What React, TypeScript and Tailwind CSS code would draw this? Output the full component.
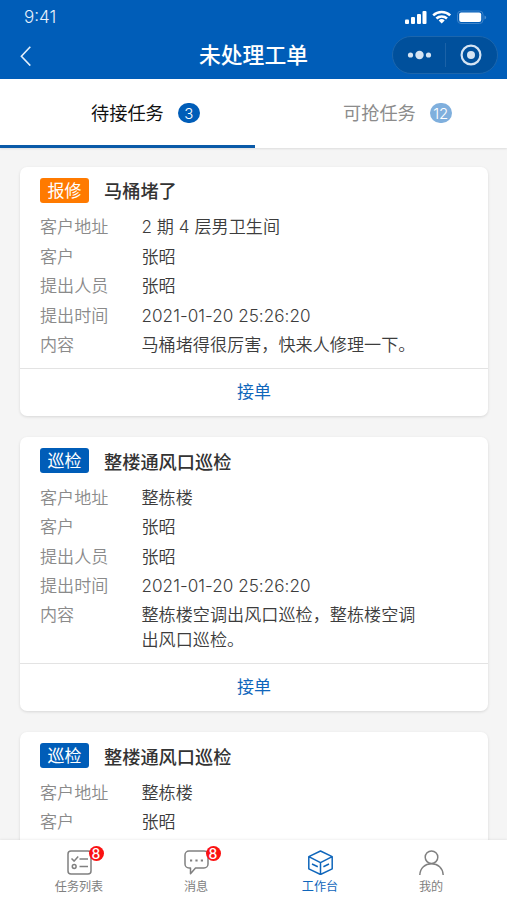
import type { ReactNode } from 'react';

interface Order {
  tag: string;
  tagClass: string;
  title: string;
  rows: { label: string; value: string }[];
  // the last card runs on under the tab bar, only its head is shown
  partial?: boolean;
}

const inspection: Order = {
  tag: '巡检',
  tagClass: 'bg-[#005db8]',
  title: '整楼通风口巡检',
  rows: [
    { label: '客户地址', value: '整栋楼' },
    { label: '客户', value: '张昭' },
    { label: '提出人员', value: '张昭' },
    { label: '提出时间', value: '2021-01-20 25:26:20' },
    { label: '内容', value: '整栋楼空调出风口巡检，整栋楼空调出风口巡检。' },
  ],
};

const orders: Order[] = [
  {
    tag: '报修',
    tagClass: 'bg-[#ff7a00]',
    title: '马桶堵了',
    rows: [
      { label: '客户地址', value: '2 期 4 层男卫生间' },
      { label: '客户', value: '张昭' },
      { label: '提出人员', value: '张昭' },
      { label: '提出时间', value: '2021-01-20 25:26:20' },
      { label: '内容', value: '马桶堵得很厉害，快来人修理一下。' },
    ],
  },
  inspection,
  { ...inspection, rows: inspection.rows.slice(0, 2), partial: true },
];

export default function App() {
  return (
    <div className="flex h-[900px] w-[507px] flex-col overflow-hidden bg-[#f5f5f5] font-['Inter','Noto_Sans_CJK_SC',sans-serif]">
      <Header />
      <div className="z-10 flex h-[69px] shrink-0 bg-white shadow-[0_1px_2px_rgba(0,0,0,0.1)]">
        <Tab label="待接任务" count={3} active />
        <Tab label="可抢任务" count={12} />
      </div>
      <main className="flex min-h-0 flex-1 flex-col gap-[21px] pt-[19px] pr-[19px] pl-5">
        {orders.map((order, i) => (
          <OrderCard key={i} order={order} />
        ))}
      </main>
      <TabBar />
    </div>
  );
}

function Header() {
  return (
    <header className="flex h-[79px] shrink-0 flex-col bg-[#005db8] text-white">
      <div className="flex h-[35px] items-center justify-between pr-[20px] pl-[24px]">
        <span className="pt-px text-[17px] font-light text-[#e6f1fc]">9:41</span>
        <StatusIcons />
      </div>
      <div className="grid h-[40px] grid-cols-[1fr_auto_1fr] items-center pr-[9px] pl-[20px]">
        <svg className="mt-[2px]" width="12" height="20" viewBox="0 0 12 20" fill="none" stroke="#e3effb" strokeWidth="1.6">
          <path d="M10.3 0.8 L1.4 10.3 L10.3 19.6" />
        </svg>
        <h1 className="-ml-[11px] pt-[2px] text-[21.8px] leading-none font-medium">未处理工单</h1>
        <div className="flex h-[38px] w-[106px] items-center justify-self-end rounded-full border border-[#1c66ad] bg-[#00509c]">
          <svg width="104" height="36" viewBox="0 0 104 36" fill="none">
            <circle cx="17.5" cy="18" r="2.6" fill="#d5e4f3" />
            <circle cx="26.5" cy="18" r="4.2" fill="#d5e4f3" />
            <circle cx="35.5" cy="18" r="2.6" fill="#d5e4f3" />
            <path d="M52.5 6v24" stroke="#1b62a7" />
            <circle cx="78" cy="18" r="9.4" stroke="#d5e4f3" strokeWidth="2.2" />
            <circle cx="78" cy="18" r="4" fill="#d5e4f3" />
          </svg>
        </div>
      </div>
    </header>
  );
}

function StatusIcons() {
  return (
    <svg className="-mt-[2px]" width="82" height="16" viewBox="0 0 82 16" fill="none">
      <g fill="#fff">
        <rect x="0" y="10.5" width="4" height="4.5" rx="1" />
        <rect x="6" y="8" width="4" height="7" rx="1" />
        <rect x="12" y="5" width="4" height="10" rx="1" />
        <rect x="17.5" y="2" width="4" height="13" rx="1" />
      </g>
      <g stroke="#fff" strokeWidth="2.5">
        <path d="M28.2 6.3a12.3 12.3 0 0 1 17 0" />
        <path d="M31.4 9.5a7.7 7.7 0 0 1 10.6 0" />
      </g>
      <path d="M33.7 11.5a4.4 4.4 0 0 1 6 0l-3 3z" fill="#fff" />
      <rect x="52.5" y="2" width="25.5" height="12.5" rx="3.5" stroke="#3f84c9" />
      <rect x="54.2" y="3.6" width="22" height="9.3" rx="2" fill="#fff" />
      <path d="M79.5 6.5v4q1.6-.6 1.6-2t-1.6-2z" fill="#4f8fcf" />
    </svg>
  );
}

function Tab({ label, count, active }: { label: string; count: number; active?: boolean }) {
  return (
    <div
      className={`flex items-center border-b-[3px] pt-[2px] ${
        active ? 'w-[255px] border-[#0a5aa8] pl-[91px] text-[#111]' : 'w-[252px] border-transparent pl-[88px] text-[#8c8c8c]'
      }`}
    >
      <span className="text-[18.2px] leading-none">{label}</span>
      <span
        className={`ml-[14px] flex h-5 w-[22px] items-center justify-center rounded-full text-[15px] leading-none font-[350] text-white ${
          active ? 'bg-[#005db8]' : 'bg-[#7fafdd]'
        }`}
      >
        {count}
      </span>
    </div>
  );
}

function OrderCard({ order }: { order: Order }) {
  return (
    <section
      className={`bg-white shadow-[0_1px_3px_rgba(0,0,0,0.12)] ${
        order.partial ? 'min-h-0 flex-1 rounded-t-[7px]' : 'shrink-0 rounded-[7px]'
      }`}
    >
      <div className={`px-5 pt-[11px] ${order.partial ? '' : 'pb-[10.5px]'}`}>
        <div className="flex h-[25px] items-center">
          <span className={`flex h-[25px] w-[49px] items-center justify-center rounded-[3px] pt-px text-[17px] leading-none text-white ${order.tagClass}`}>
            {order.tag}
          </span>
          <h2 className="ml-[15px] pt-[2px] text-[18.2px] leading-none font-medium text-[#333]">{order.title}</h2>
        </div>
        <dl className="mt-[12.4px] flex flex-col gap-[5px] text-[17.1px] leading-[24.4px]">
          {order.rows.map(row => (
            <div key={row.label} className="flex">
              <dt className="w-[101.5px] shrink-0 font-[350] text-[#8a8a8a]">{row.label}</dt>
              <dd className="w-[280px] font-[350] tracking-[0.03px] text-[#3c3c3c]">{row.value}</dd>
            </div>
          ))}
        </dl>
      </div>
      {!order.partial && (
        <button className="block h-[48.5px] w-full border-t border-[#e3e3e3] text-[17px] leading-[45px] text-[#0f66bb]">
          接单
        </button>
      )}
    </section>
  );
}

function TabBar() {
  return (
    <nav className="z-10 flex h-[60px] shrink-0 bg-white shadow-[0_-1px_2px_rgba(0,0,0,0.06)]">
      <NavItem className="w-[158px] text-[#808080]" label="任务列表" badge={8}>
        <rect x="1" y="1" width="23" height="23" rx="3" />
        <path d="M4.5 8.5l2.7 2.6 4-4.6M12.5 9H21M12.5 16.5H21" />
        <circle cx="7.2" cy="16.5" r="1.9" />
      </NavItem>
      <NavItem className="w-[76px] text-[#808080]" label="消息" badge={8}>
        <path d="M5 1h15a4 4 0 0 1 4 4v9a4 4 0 0 1-4 4h-8.500L6.500 23.700V18H5a4 4 0 0 1-4-4V5a4 4 0 0 1 4-4z" />
        <path d="M6 10.500h2.200M11.400 10.500h2.200M16.800 10.500h2.200" strokeWidth="2.200" />
      </NavItem>
      <NavItem className="w-[172px] text-[#0f66bb]" label="工作台">
        <path d="M12.500 1l11.700 5.700v12.100l-11.700 5.700L.8 18.800V6.700zM.8 6.700l11.700 6 11.700-6M12.500 12.700v11.800" />
        <path d="M4 14l5.800 2.700M15.400 16.700l5.600-2.700" />
      </NavItem>
      <NavItem className="w-[50px] text-[#808080]" label="我的">
        <circle cx="12.5" cy="7.2" r="6.3" />
        <path d="M.8 25C1.200 18 6 13.800 12.500 13.800S23.800 18 24.200 25" />
      </NavItem>
    </nav>
  );
}

interface NavItemProps {
  label: string;
  className: string;
  badge?: number;
  children: ReactNode;
}

function NavItem({ label, className, badge, children }: NavItemProps) {
  return (
    <div className={`flex flex-col items-center pt-[9.5px] ${className}`}>
      <div className="relative">
        <svg width="25" height="25" viewBox="0 0 25 25" fill="none" stroke="currentColor" strokeWidth="1.5" strokeLinejoin="round">
          {children}
        </svg>
        {badge && (
          <span className="absolute -top-[3.5px] left-[22px] flex size-[15px] items-center justify-center rounded-full bg-[#fb1212] pt-px text-[14px] leading-none font-medium text-white">
            {badge}
          </span>
        )}
      </div>
      <span className="mt-[6px] text-[12.1px] leading-none whitespace-nowrap">{label}</span>
    </div>
  );
}
